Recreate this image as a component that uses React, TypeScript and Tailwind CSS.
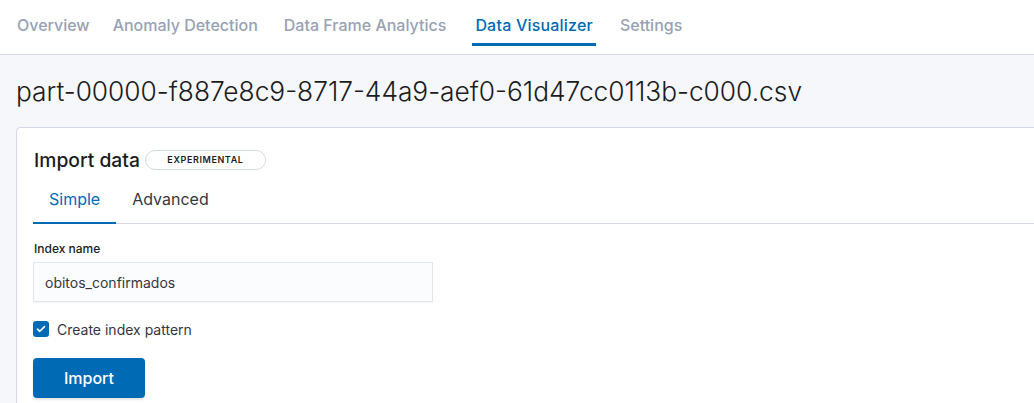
import React from "react";

const font = { fontFamily: "Inter, 'Noto Sans', sans-serif" };

export default function App() {
  const tabs = [
    { t: "Overview", ml: "ml-[17px]" },
    { t: "Anomaly Detection", ml: "ml-[23px]" },
    { t: "Data Frame Analytics", ml: "ml-[26px]" },
    { t: "Data Visualizer", ml: "ml-[29px]" },
    { t: "Settings", ml: "ml-[27px]" },
  ];
  return (
    <div className="w-[1034px] h-[403px] overflow-hidden bg-[#f5f7fa] text-[#343741]" style={font}>
      <div className="h-[55px] bg-white border-b border-[#d3dae6] flex items-stretch">
        {tabs.map(({ t, ml }) => {
          const active = t === "Data Visualizer";
          return (
            <div
              key={t}
              className={`relative flex items-center pb-[4px] text-[16px] font-medium ${ml} ${active ? "text-[#006bb4] tracking-[0.2px]" : "text-[#98a2b3]"}`}
            >
              {t}
              {active && <div className="absolute -left-[3px] -right-[3px] bottom-[8px] h-[3px] bg-[#006bb4]" />}
            </div>
          );
        })}
      </div>
      <div className="pl-[16px]">
        <h1 className="pt-[17px] text-[26.3px] font-light leading-[40px] text-[#1a1c21] whitespace-nowrap">
          part-00000-f887e8c9-8717-44a9-aef0-61d47cc0113b-c000.csv
        </h1>
        <div className="mt-[15px] bg-white border border-[#d3dae6] rounded-[4px] w-[1100px] pt-[16px] pl-[16px] pb-[20px]">
          <div className="flex items-center gap-[5px]">
            <h2 className="text-[19.3px] font-medium leading-[32px] text-[#1a1c21] pl-[1px]">Import data</h2>
            <span className="border border-[#d3dae6] rounded-full h-[20px] w-[121px] flex items-center justify-center text-[9px] font-semibold tracking-[0.6px] text-[#1a1c21]">
              EXPERIMENTAL
            </span>
          </div>
          <div className="mt-[6px] flex border-b border-[#d3dae6] h-[42px] text-[16px]">
            <div className="relative flex items-center pb-[7px] px-[16px] text-[#006bb4]">
              Simple
              <div className="absolute left-0 right-0 -bottom-[1px] h-[2px] bg-[#006bb4]" />
            </div>
            <div className="flex items-center pb-[7px] px-[16px] text-[#343741]">Advanced</div>
          </div>
          <div className="mt-[17px] text-[12px] font-medium text-[#1a1c21] leading-[16px] pl-[1px]">Index name</div>
          <div className="mt-[5px] w-[400px] h-[40px] bg-[#fbfcfd] border border-[#e0e5ee] shadow-[0_1px_1px_rgba(0,0,0,0.04)] flex items-center px-[11px] text-[14px] text-[#343741]">
            obitos_confirmados
          </div>
          <div className="mt-[17px] flex items-center gap-[8px] h-[20px]">
            <div className="w-[16px] h-[16px] rounded-[3px] bg-[#006bb4] flex items-center justify-center">
              <svg width="10" height="8" viewBox="0 0 10 8" fill="none">
                <path d="M1.5 4.2 L3.8 6.3 L8.5 1.6" stroke="white" strokeWidth="1.6" strokeLinecap="round" strokeLinejoin="round" />
              </svg>
            </div>
            <span className="text-[14px] text-[#343741]">Create index pattern</span>
          </div>
          <button className="mt-[19px] w-[112px] h-[40px] rounded-[4px] bg-[#006bb4] text-white text-[16px] font-medium shadow-[0_2px_2px_rgba(0,0,0,0.1)]">
            Import
          </button>
        </div>
      </div>
    </div>
  );
}
